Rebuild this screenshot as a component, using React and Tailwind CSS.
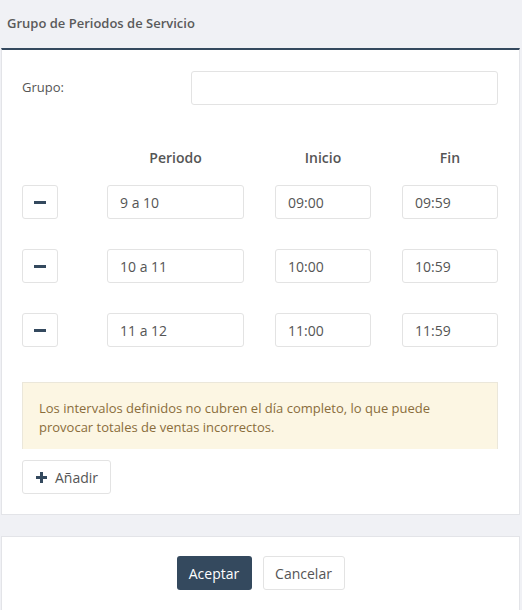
import { Fragment } from "react";

const rows = [
  { periodo: "9 a 10", inicio: "09:00", fin: "09:59" },
  { periodo: "10 a 11", inicio: "10:00", fin: "10:59" },
  { periodo: "11 a 12", inicio: "11:00", fin: "11:59" },
];

const inputCls =
  "h-[34px] rounded-[3px] border border-[#e3e3e3] bg-white px-3 text-[14px] text-[#555] outline-none";

const App = () => {
  return (
    <div
      className="min-h-[610px] bg-[#f0f1f5] pl-[1px] pr-[2px]"
      style={{ fontFamily: '"Open Sans", "Liberation Sans", sans-serif' }}
    >
      {/* Header */}
      <div className="flex h-[48px] items-center pl-[6px] text-[13px] font-semibold text-[#5a5a5a]">
        Grupo de Periodos de Servicio
      </div>

      {/* Main panel */}
      <div className="border-x border-b border-t-2 border-[#e3e4e8] border-t-[#34495e] bg-white px-[20px] pb-[20px] pt-[21px]">
        <div className="flex items-center">
          <label className="w-[169px] text-[13px] text-[#555]">Grupo:</label>
          <input className={`${inputCls} w-[307px]`} />
        </div>

        <div className="mt-[42px] flex text-[14px] font-semibold text-[#555]">
          <div className="w-[36px]" />
          <div className="ml-[49px] w-[137px] text-center">Periodo</div>
          <div className="ml-[31px] w-[96px] text-center">Inicio</div>
          <div className="ml-[31px] w-[96px] text-center">Fin</div>
        </div>

        <div className="mt-[17px] flex flex-col gap-[30px]">
          {rows.map((r) => (
            <div key={r.periodo} className="flex">
              <button className="flex h-[34px] w-[36px] items-center justify-center rounded-[3px] border border-[#e3e3e3] bg-white">
                <span className="block h-[3px] w-[12px] bg-[#34495e]" />
              </button>
              <input
                className={`${inputCls} ml-[49px] w-[137px]`}
                defaultValue={r.periodo}
              />
              <input
                className={`${inputCls} ml-[31px] w-[96px]`}
                defaultValue={r.inicio}
              />
              <input
                className={`${inputCls} ml-[31px] w-[96px]`}
                defaultValue={r.fin}
              />
            </div>
          ))}
        </div>

        <div className="mt-[35px] w-[476px] border-x border-t border-[#ebe7da] bg-[#fcf6e3] px-[16px] pb-[12px] pt-[16px] text-[13px] leading-[19px] text-[#8a6d3b]">
          Los intervalos definidos no cubren el día completo, lo que puede
          provocar totales de ventas incorrectos.
        </div>

        <button className="mt-[11px] flex h-[34px] w-[89px] items-center gap-[8px] rounded-[3px] border border-[#e3e3e3] bg-white pl-[13px] text-[14px] text-[#555]">
          <svg width="11" height="11" viewBox="0 0 11 11">
            <rect x="4" y="0" width="3" height="11" fill="#34495e" />
            <rect x="0" y="4" width="11" height="3" fill="#34495e" />
          </svg>
          Añadir
        </button>
      </div>

      {/* Footer panel */}
      <div className="mt-[21px] flex h-[80px] justify-center gap-[11px] border border-[#e3e4e8] bg-white pt-[19px]">
        <button className="h-[34px] w-[75px] rounded-[3px] bg-[#34495e] text-[14px] text-white">
          Aceptar
        </button>
        <button className="h-[34px] w-[82px] rounded-[3px] border border-[#e3e3e3] bg-white text-[14px] text-[#555]">
          Cancelar
        </button>
      </div>
    </div>
  );
};

export default App;
